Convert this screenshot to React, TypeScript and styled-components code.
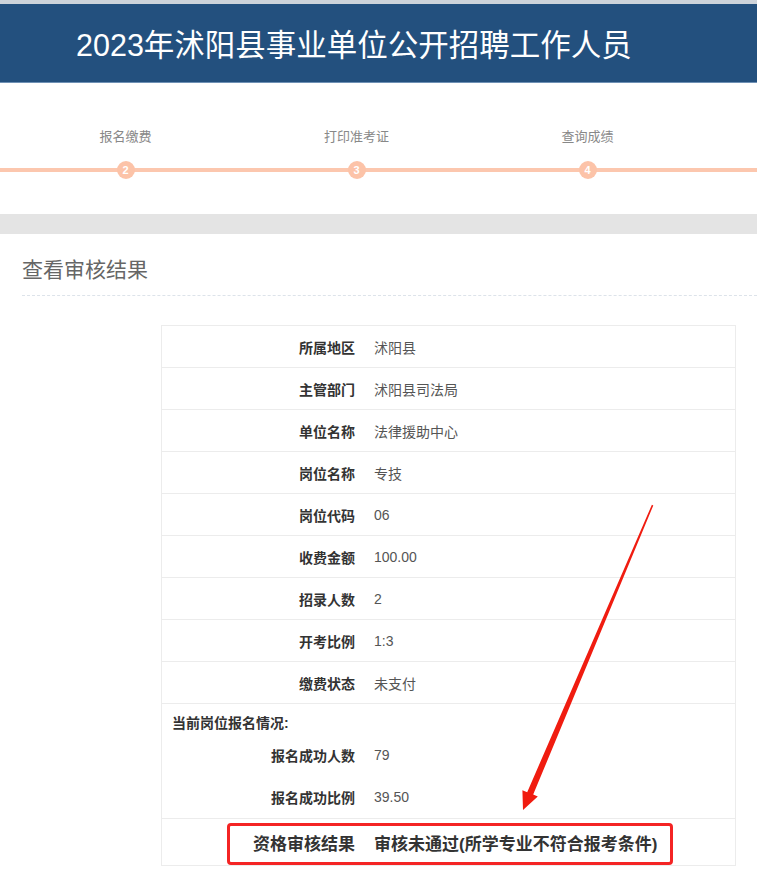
import React from 'react';
import styled, {createGlobalStyle} from 'styled-components';

const GlobalStyle = createGlobalStyle`
  body {
    margin: 0;
    background: #fff;
    font-family: "Liberation Sans", "Noto Sans CJK SC", sans-serif;
  }
`;

const Page = styled.div`
  position: relative;
  width: 757px;
  min-height: 875px;
  overflow: hidden;
`;

const Header = styled.header`
  height: 78px;
  border-top: 4px solid #cdd3da;
  border-bottom: 1px solid #6f91b5;
  background: #23507e;
  display: flex;
  align-items: center;
  padding-left: 76px;
`;

const HeaderTitle = styled.h1`
  margin: 0;
  color: #fff;
  font-size: 30.5px;
  font-weight: normal;
`;

const Steps = styled.div`
  padding: 44px 0 35px;
`;

const StepRow = styled.div`
  display: flex;
  padding-left: 10px;
  background: linear-gradient(#fcc7ae, #fcc7ae) no-repeat 0 41px / 100% 4px;
`;

const StepItem = styled.div`
  width: 231px;
  display: flex;
  flex-direction: column;
  align-items: center;
`;

const StepLabel = styled.div`
  font-size: 13px;
  line-height: 20px;
  color: #888;
  margin-bottom: 14px;
`;

const StepDot = styled.div`
  width: 18px;
  height: 18px;
  border-radius: 50%;
  background: #fcc3a8;
  color: #fff;
  font-size: 11px;
  font-weight: bold;
  line-height: 18px;
  text-align: center;
`;

const Band = styled.div`
  height: 20px;
  background: #e4e4e4;
`;

const Section = styled.section`
  padding-left: 22px;
`;

const SectionTitle = styled.h2`
  margin: 21px 0 0;
  padding-bottom: 10px;
  font-size: 21px;
  line-height: 30px;
  font-weight: normal;
  color: #666;
  border-bottom: 1px dashed #dde3ea;
`;

const Table = styled.div`
  margin: 29px 21px 0 139px;
  border: 1px solid #ececec;
  border-bottom: none;
`;

const Row = styled.div<{ $tall?: boolean }>`
  display: flex;
  align-items: center;
  height: ${p => (p.$tall ? 47 : 42)}px;
  border-bottom: 1px solid #ececec;
  box-sizing: border-box;
`;

const SubRow = styled.div`
  display: flex;
  align-items: center;
  height: 42px;
`;

const Label = styled.div<{ $big?: boolean }>`
  width: 193px;
  text-align: right;
  font-size: ${p => (p.$big ? 17 : 14)}px;
  font-weight: bold;
  color: #333;
  flex-shrink: 0;
`;

const Value = styled.div<{ $big?: boolean }>`
  padding-left: 19px;
  font-size: ${p => (p.$big ? 17 : 14)}px;
  font-weight: ${p => (p.$big ? 'bold' : 'normal')};
  color: ${p => (p.$big ? '#333' : '#555')};
`;

const Group = styled.div`
  padding-top: 8px;
  border-bottom: 1px solid #ececec;
`;

const GroupTitle = styled.div`
  padding-left: 10px;
  font-size: 14px;
  line-height: 22px;
  font-weight: bold;
  color: #333;
`;

const Highlight = styled.div`
  position: absolute;
  left: 227px;
  top: 823px;
  width: 446px;
  height: 42px;
  box-sizing: border-box;
  border: 3px solid #f42424;
  border-radius: 4px;
  pointer-events: none;
`;

const ArrowLayer = styled.svg`
  position: absolute;
  left: 0;
  top: 0;
  pointer-events: none;
`;

const rows = [
  ['所属地区', '沭阳县'],
  ['主管部门', '沭阳县司法局'],
  ['单位名称', '法律援助中心'],
  ['岗位名称', '专技'],
  ['岗位代码', '06'],
  ['收费金额', '100.00'],
  ['招录人数', '2'],
  ['开考比例', '1:3'],
  ['缴费状态', '未支付'],
];

const steps = [
  ['报名缴费', '2'],
  ['打印准考证', '3'],
  ['查询成绩', '4'],
];

export default function App() {
  return (
    <Page>
      <GlobalStyle/>
      <Header>
        <HeaderTitle>2023年沭阳县事业单位公开招聘工作人员</HeaderTitle>
      </Header>

      <Steps>
        <StepRow>
          {steps.map(([label, n]) => (
            <StepItem key={n}>
              <StepLabel>{label}</StepLabel>
              <StepDot>{n}</StepDot>
            </StepItem>
          ))}
        </StepRow>
      </Steps>

      <Band/>

      <Section>
        <SectionTitle>查看审核结果</SectionTitle>
        <Table>
          {rows.map(([k, v]) => (
            <Row key={k}>
              <Label>{k}</Label>
              <Value>{v}</Value>
            </Row>
          ))}
          <Group>
            <GroupTitle>当前岗位报名情况:</GroupTitle>
            <SubRow>
              <Label>报名成功人数</Label>
              <Value>79</Value>
            </SubRow>
            <SubRow>
              <Label>报名成功比例</Label>
              <Value>39.50</Value>
            </SubRow>
          </Group>
          <Row $tall>
            <Label $big>资格审核结果</Label>
            <Value $big>审核未通过(所学专业不符合报考条件)</Value>
          </Row>
        </Table>
      </Section>

      {/* red annotation drawn over the screenshot */}
      <Highlight/>
      <ArrowLayer width="757" height="875" viewBox="0 0 757 875">
        <polygon
          fill="#f01c10"
          points="651.9,504.7 653.3,505.4 533.2,794.6 537.8,796.6 523,810 522.4,790.2 527.2,792.2"
        />
      </ArrowLayer>
    </Page>
  );
}
